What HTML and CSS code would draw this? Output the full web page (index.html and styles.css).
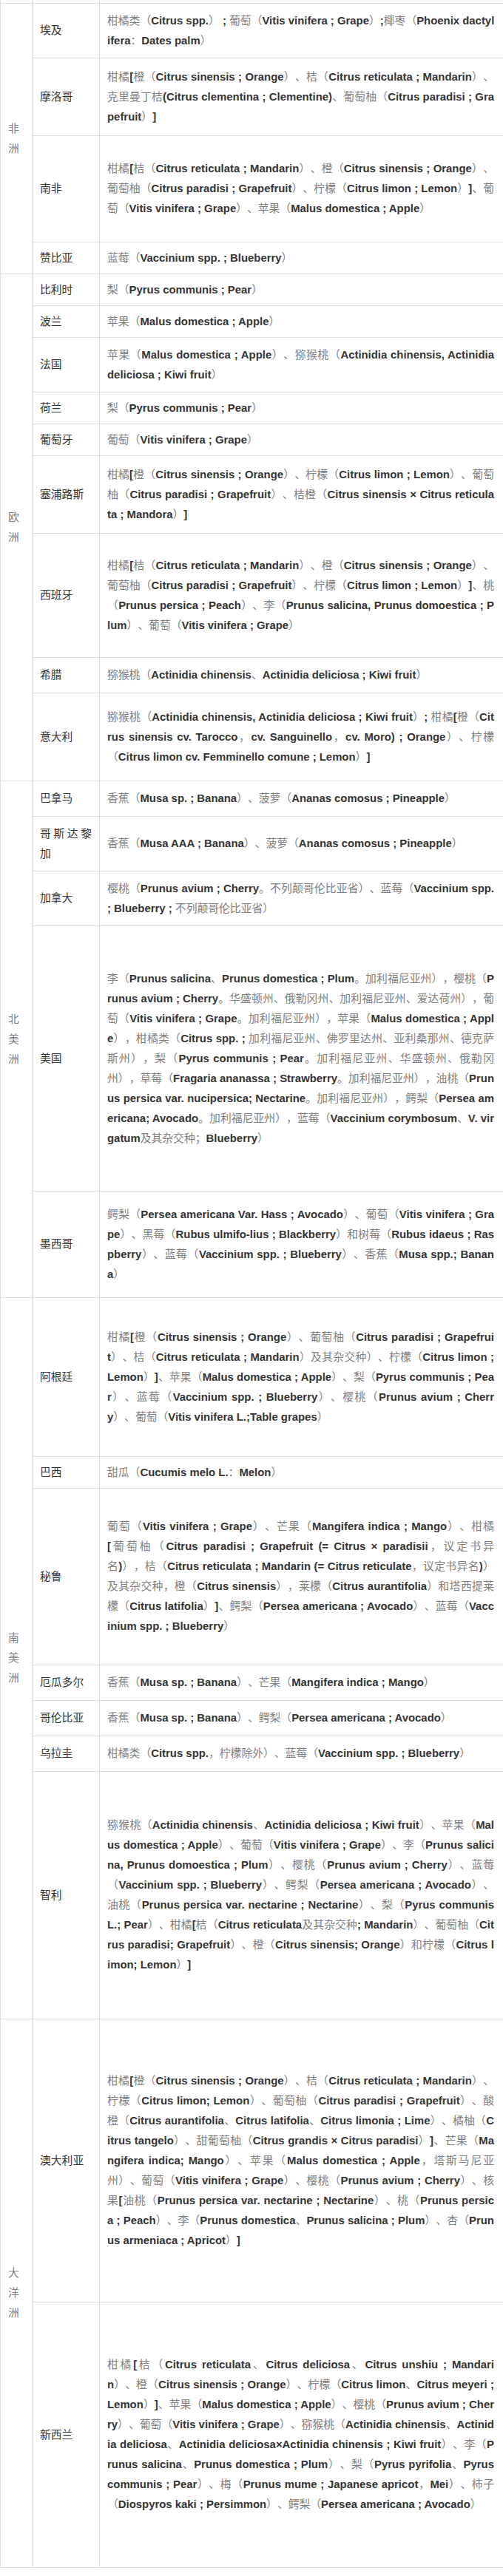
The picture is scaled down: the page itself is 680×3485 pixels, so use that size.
FILE: index.html
```html
<!DOCTYPE html>
<html lang="zh-CN">
<head>
<meta charset="utf-8">
<title>输华水果准入目录</title>
<link rel="stylesheet" href="styles.css">
</head>
<body>
<table class="tbl">
<colgroup><col class="c1"><col class="c2"><col class="c3"></colgroup>
<tbody>
<tr class="r40"><td class="cont"></td><td class="country"></td><td class="fruit"></td></tr>

<tr class="r74"><td class="cont" rowspan="4">非洲</td><td class="country">埃及</td><td class="fruit"><span class="jl">柑橘类（<b>Citrus spp.</b>）<b> ; </b>葡萄（<b>Vitis vinifera ; Grape</b>）<b>;</b>椰枣（<b>Phoenix dactyl</b></span><b>ifera</b>：<b>Dates palm</b>）</td></tr>
<tr class="r105"><td class="country">摩洛哥</td><td class="fruit"><span class="jl">柑橘<b>[</b>橙（<b>Citrus sinensis ; Orange</b>）、桔（<b>Citrus reticulata ; Mandarin</b>）、<br>克里曼丁桔<b>(Citrus clementina ; Clementine)</b>、葡萄柚（<b>Citrus paradisi ; Gra</b></span><b>pefruit</b>）<b>]</b></td></tr>
<tr class="r144"><td class="country">南非</td><td class="fruit"><span class="jl">柑橘<b>[</b>桔（<b>Citrus reticulata ; Mandarin</b>）、橙（<b>Citrus sinensis ; Orange</b>）、<br>葡萄柚（<b>Citrus paradisi ; Grapefruit</b>）、柠檬（<b>Citrus limon ; Lemon</b>）<b>]</b>、葡</span>萄（<b>Vitis vinifera ; Grape</b>）、苹果（<b>Malus domestica ; Apple</b>）</td></tr>
<tr class="r43"><td class="country">赞比亚</td><td class="fruit">蓝莓（<b>Vaccinium spp. ; Blueberry</b>）</td></tr>

<tr class="r43"><td class="cont" rowspan="9">欧洲</td><td class="country">比利时</td><td class="fruit">梨（<b>Pyrus communis ; Pear</b>）</td></tr>
<tr class="r43"><td class="country">波兰</td><td class="fruit">苹果（<b>Malus domestica ; Apple</b>）</td></tr>
<tr class="r74"><td class="country">法国</td><td class="fruit"><span class="jl">苹果（<b>Malus domestica ; Apple</b>）、猕猴桃（<b>Actinidia chinensis, Actinidia</b></span><b>deliciosa ; Kiwi fruit</b>）</td></tr>
<tr class="r43"><td class="country">荷兰</td><td class="fruit">梨（<b>Pyrus communis ; Pear</b>）</td></tr>
<tr class="r43"><td class="country">葡萄牙</td><td class="fruit">葡萄（<b>Vitis vinifera ; Grape</b>）</td></tr>
<tr class="r105"><td class="country">塞浦路斯</td><td class="fruit"><span class="jl">柑橘<b>[</b>橙（<b>Citrus sinensis ; Orange</b>）、柠檬（<b>Citrus limon ; Lemon</b>）、葡萄<br>柚（<b>Citrus paradisi ; Grapefruit</b>）、桔橙（<b>Citrus sinensis × Citrus reticula</b></span><b>ta ; Mandora</b>）<b>]</b></td></tr>
<tr class="r168"><td class="country">西班牙</td><td class="fruit"><span class="jl">柑橘<b>[</b>桔（<b>Citrus reticulata ; Mandarin</b>）、橙（<b>Citrus sinensis ; Orange</b>）、<br>葡萄柚（<b>Citrus paradisi ; Grapefruit</b>）、柠檬（<b>Citrus limon ; Lemon</b>）<b>]</b>、桃<br>（<b>Prunus persica ; Peach</b>）、李（<b>Prunus salicina, Prunus domoestica ; P</b></span><b>lum</b>）、葡萄（<b>Vitis vinifera ; Grape</b>）</td></tr>
<tr class="r48"><td class="country">希腊</td><td class="fruit">猕猴桃（<b>Actinidia chinensis</b>、<b>Actinidia deliciosa ; Kiwi fruit</b>）</td></tr>
<tr class="r119"><td class="country">意大利</td><td class="fruit"><span class="jl">猕猴桃（<b>Actinidia chinensis, Actinidia deliciosa ; Kiwi fruit</b>）<b>; </b>柑橘<b>[</b>橙（<b>Cit<br>rus sinensis cv. Tarocco</b>，<b>cv. Sanguinello</b>，<b>cv. Moro) ; Orange</b>）、柠檬</span>（<b>Citrus limon cv. Femminello comune ; Lemon</b>）<b>]</b></td></tr>

<tr class="r48"><td class="cont" rowspan="5">北美洲</td><td class="country">巴拿马</td><td class="fruit">香蕉（<b>Musa sp. ; Banana</b>）、菠萝（<b>Ananas comosus ; Pineapple</b>）</td></tr>
<tr class="r74"><td class="country">哥斯达黎加</td><td class="fruit">香蕉（<b>Musa AAA ; Banana</b>）、菠萝（<b>Ananas comosus ; Pineapple</b>）</td></tr>
<tr class="r74"><td class="country">加拿大</td><td class="fruit"><span class="jl">樱桃（<b>Prunus avium ; Cherry</b>。不列颠哥伦比亚省）、蓝莓（<b>Vaccinium spp.</b></span><b>; Blueberry ; </b>不列颠哥伦比亚省）</td></tr>
<tr class="r359"><td class="country">美国</td><td class="fruit"><span class="jl">李（<b>Prunus salicina</b>、<b>Prunus domestica ; Plum</b>。加利福尼亚州），樱桃（<b>P<br>runus avium ; Cherry</b>。华盛顿州、俄勒冈州、加利福尼亚州、爱达荷州），葡<br>萄（<b>Vitis vinifera ; Grape</b>。加利福尼亚州），苹果（<b>Malus domestica ; Appl<br>e</b>），柑橘类（<b>Citrus spp. ; </b>加利福尼亚州、佛罗里达州、亚利桑那州、德克萨<br>斯州），梨（<b>Pyrus communis ; Pear</b>。加利福尼亚州、华盛顿州、俄勒冈<br>州），草莓（<b>Fragaria ananassa ; Strawberry</b>。加利福尼亚州），油桃（<b>Prun<br>us persica var. nucipersica; Nectarine</b>。加利福尼亚州），鳄梨（<b>Persea am<br>ericana; Avocado</b>。加利福尼亚州），蓝莓（<b>Vaccinium corymbosum</b>、<b>V. vir</b></span><b>gatum</b>及其杂交种；<b>Blueberry</b>）</td></tr>
<tr class="r144"><td class="country">墨西哥</td><td class="fruit"><span class="jl">鳄梨（<b>Persea americana Var. Hass ; Avocado</b>）、葡萄（<b>Vitis vinifera ; Gra<br>pe</b>）、黑莓（<b>Rubus ulmifo-lius ; Blackberry</b>）和树莓（<b>Rubus idaeus ; Ras<br>pberry</b>）、蓝莓（<b>Vaccinium spp. ; Blueberry</b>）、香蕉（<b>Musa spp.; Banan</b></span><b>a</b>）</td></tr>

<tr class="r215"><td class="cont" rowspan="7">南美洲</td><td class="country">阿根廷</td><td class="fruit"><span class="jl">柑橘<b>[</b>橙（<b>Citrus sinensis ; Orange</b>）、葡萄柚（<b>Citrus paradisi ; Grapefrui<br>t</b>）、桔（<b>Citrus reticulata ; Mandarin</b>）及其杂交种）、柠檬（<b>Citrus limon ;<br>Lemon</b>）<b>]</b>、苹果（<b>Malus domestica ; Apple</b>）、梨（<b>Pyrus communis ; Pea<br>r</b>）、蓝莓（<b>Vaccinium spp. ; Blueberry</b>）、樱桃（<b>Prunus avium ; Cherr</b></span><b>y</b>）、葡萄（<b>Vitis vinifera L.;Table grapes</b>）</td></tr>
<tr class="r43"><td class="country">巴西</td><td class="fruit">甜瓜（<b>Cucumis melo L.</b>：<b>Melon</b>）</td></tr>
<tr class="r239"><td class="country">秘鲁</td><td class="fruit"><span class="jl">葡萄（<b>Vitis vinifera ; Grape</b>）、芒果（<b>Mangifera indica ; Mango</b>）、柑橘<br><b>[</b>葡萄柚（<b>Citrus paradisi ; Grapefruit (= Citrus × paradisii</b>，议定书异<br>名<b>)</b>），桔（<b>Citrus reticulata ; Mandarin (= Citrus reticulate</b>，议定书异名<b>)</b>）<br>及其杂交种，橙（<b>Citrus sinensis</b>），莱檬（<b>Citrus aurantifolia</b>）和塔西提莱<br>檬（<b>Citrus latifolia</b>）<b>]</b>、鳄梨（<b>Persea americana ; Avocado</b>）、蓝莓（<b>Vacc</b></span><b>inium spp. ; Blueberry</b>）</td></tr>
<tr class="r48"><td class="country">厄瓜多尔</td><td class="fruit">香蕉（<b>Musa sp. ; Banana</b>）、芒果（<b>Mangifera indica ; Mango</b>）</td></tr>
<tr class="r48"><td class="country">哥伦比亚</td><td class="fruit">香蕉（<b>Musa sp. ; Banana</b>）、鳄梨（<b>Persea americana ; Avocado</b>）</td></tr>
<tr class="r48"><td class="country">乌拉圭</td><td class="fruit">柑橘类（<b>Citrus spp.</b>，柠檬除外）、蓝莓（<b>Vaccinium spp. ; Blueberry</b>）</td></tr>
<tr class="r335"><td class="country">智利</td><td class="fruit"><span class="jl">猕猴桃（<b>Actinidia chinensis</b>、<b>Actinidia deliciosa ; Kiwi fruit</b>）、苹果（<b>Mal<br>us domestica ; Apple</b>）、葡萄（<b>Vitis vinifera ; Grape</b>）、李（<b>Prunus salici<br>na, Prunus domoestica ; Plum</b>）、樱桃（<b>Prunus avium ; Cherry</b>）、蓝莓<br>（<b>Vaccinium spp. ; Blueberry</b>）、鳄梨（<b>Persea americana ; Avocado</b>）、<br>油桃（<b>Prunus persica var. nectarine ; Nectarine</b>）、梨（<b>Pyrus communis<br>L.; Pear</b>）、柑橘<b>[</b>桔（<b>Citrus reticulata</b>及其杂交种<b>; Mandarin</b>）、葡萄柚（<b>Cit<br>rus paradisi; Grapefruit</b>）、橙（<b>Citrus sinensis; Orange</b>）和柠檬（<b>Citrus l</b></span><b>imon; Lemon</b>）<b>]</b></td></tr>

<tr class="r383"><td class="cont" rowspan="2">大洋洲</td><td class="country">澳大利亚</td><td class="fruit"><span class="jl">柑橘<b>[</b>橙（<b>Citrus sinensis ; Orange</b>）、桔（<b>Citrus reticulata ; Mandarin</b>）、<br>柠檬（<b>Citrus limon; Lemon</b>）、葡萄柚（<b>Citrus paradisi ; Grapefruit</b>）、酸<br>橙（<b>Citrus aurantifolia</b>、<b>Citrus latifolia</b>、<b>Citrus limonia ; Lime</b>）、橘柚（<b>C<br>itrus tangelo</b>）、甜葡萄柚（<b>Citrus grandis × Citrus paradisi</b>）<b>]</b>、芒果（<b>Ma<br>ngifera indica; Mango</b>）、苹果（<b>Malus domestica ; Apple</b>，塔斯马尼亚<br>州）、葡萄（<b>Vitis vinifera ; Grape</b>）、樱桃（<b>Prunus avium ; Cherry</b>）、核<br>果<b>[</b>油桃（<b>Prunus persica var. nectarine ; Nectarine</b>）、桃（<b>Prunus persic<br>a ; Peach</b>）、李（<b>Prunus domestica</b>、<b>Prunus salicina ; Plum</b>）、杏（<b>Prun</b></span><b>us armeniaca ; Apricot</b>）<b>]</b></td></tr>
<tr class="r359"><td class="country">新西兰</td><td class="fruit"><span class="jl">柑橘<b>[</b>桔（<b>Citrus reticulata</b>、<b>Citrus deliciosa</b>、<b>Citrus unshiu ; Mandari<br>n</b>）、橙（<b>Citrus sinensis ; Orange</b>）、柠檬（<b>Citrus limon</b>、<b>Citrus meyeri ;<br>Lemon</b>）<b>]</b>、苹果（<b>Malus domestica ; Apple</b>）、樱桃（<b>Prunus avium ; Cher<br>ry</b>）、葡萄（<b>Vitis vinifera ; Grape</b>）、猕猴桃（<b>Actinidia chinensis</b>、<b>Actinid<br>ia deliciosa</b>、<b>Actinidia deliciosa×Actinidia chinensis ; Kiwi fruit</b>）、李（<b>P<br>runus salicina</b>、<b>Prunus domestica ; Plum</b>）、梨（<b>Pyrus pyrifolia</b>、<b>Pyrus<br>communis ; Pear</b>）、梅（<b>Prunus mume ; Japanese apricot</b>，<b>Mei</b>）、柿子</span>（<b>Diospyros kaki ; Persimmon</b>）、鳄梨（<b>Persea americana ; Avocado</b>）</td></tr>
</tbody>
</table>
</body>
</html>
```

FILE: styles.css
```css
html, body {
  margin: 0;
  padding: 0;
  background: #ffffff;
}

body {
  font-family: "Liberation Sans", "Noto Sans CJK SC", sans-serif;
  font-size: 14.8px;
  line-height: 27px;
  color: #333333;
  text-spacing-trim: space-all;
}

.tbl {
  border-collapse: collapse;
  table-layout: fixed;
  width: 680px;
  margin-top: -36px;
}

.c1 { width: 43px; }
.c2 { width: 91px; }
.c3 { width: 546px; }

.tbl td {
  border: 1px solid #dddddd;
  padding: 0 10px;
  vertical-align: middle;
  text-align: justify;
  word-break: break-all;
  text-spacing-trim: space-all;
}

.cont {
  color: #808080;
}

.country {
  color: #333333;
}

.tbl td.fruit {
  color: #808080;
  padding: 0 12px 0 10px;
  white-space: nowrap;
}

.fruit b {
  color: #333333;
  font-weight: bold;
  font-size: 14.9px;
}

.jl {
  display: block;
  text-align: justify;
  text-align-last: justify;
}

.r40 { height: 40px; }
.r43 { height: 43px; }
.r48 { height: 48px; }
.r74 { height: 74px; }
.r105 { height: 105px; }
.r119 { height: 119px; }
.r144 { height: 144px; }
.r168 { height: 168px; }
.r215 { height: 215px; }
.r239 { height: 239px; }
.r335 { height: 335px; }
.r359 { height: 359px; }
.r383 { height: 383px; }
```
